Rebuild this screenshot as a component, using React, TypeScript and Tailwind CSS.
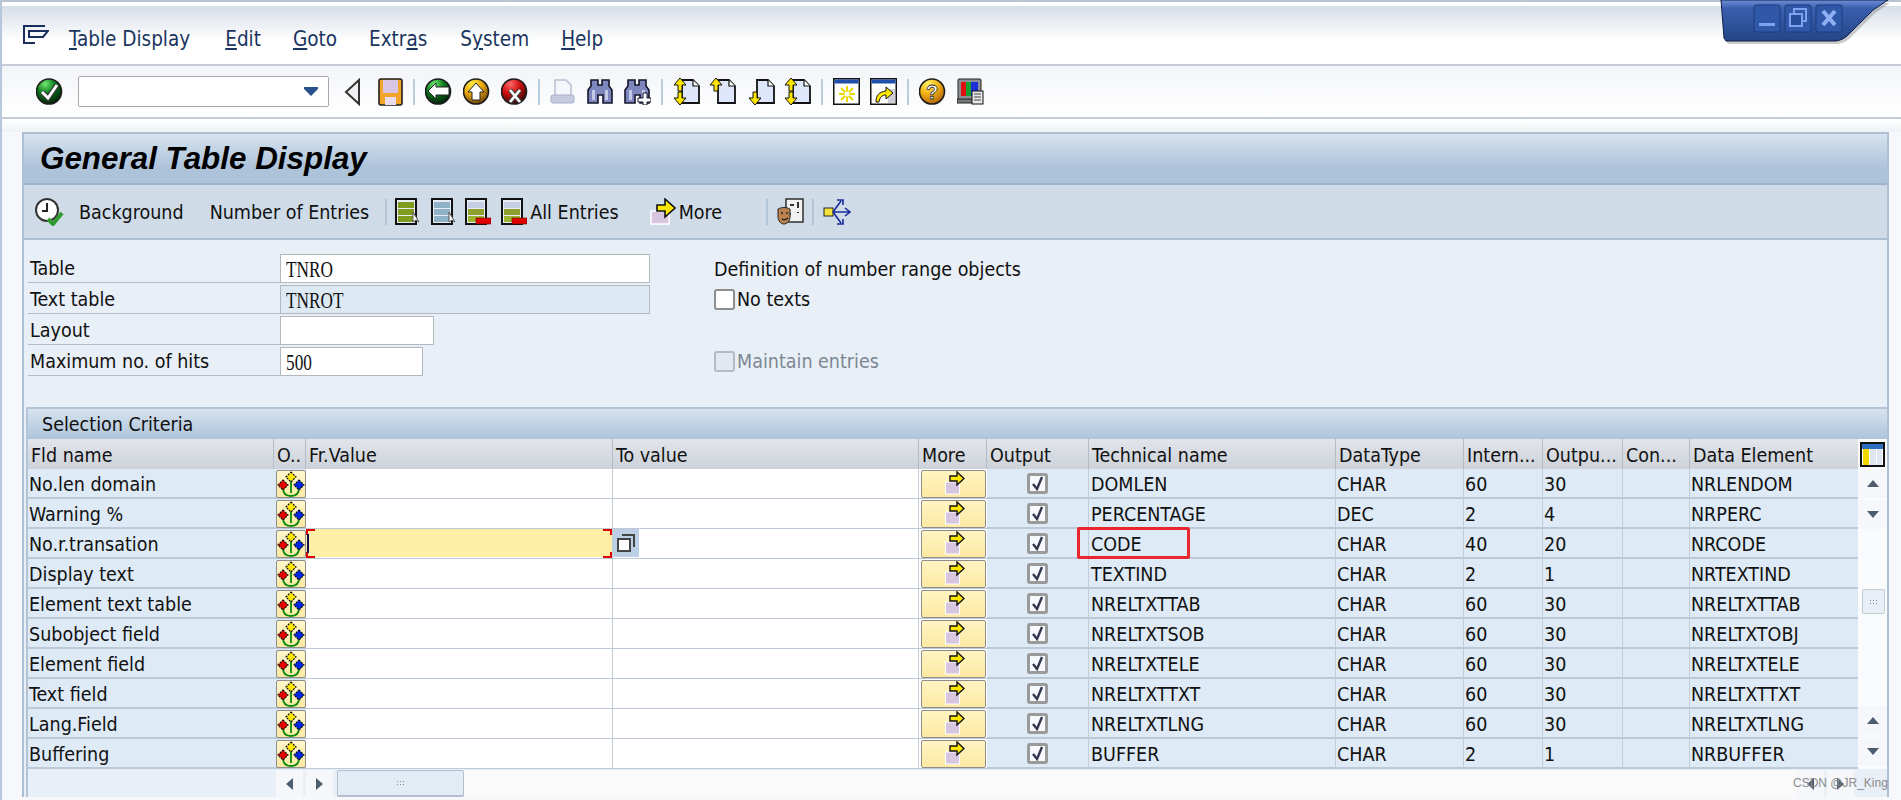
import type { ReactNode } from 'react';

const rows = [
    ['No.len domain', 'DOMLEN', 'CHAR', '60', '30', 'NRLENDOM'],
    ['Warning %', 'PERCENTAGE', 'DEC', '2', '4', 'NRPERC'],
    ['No.r.transation', 'CODE', 'CHAR', '40', '20', 'NRCODE'],
    ['Display text', 'TEXTIND', 'CHAR', '2', '1', 'NRTEXTIND'],
    ['Element text table', 'NRELTXTTAB', 'CHAR', '60', '30', 'NRELTXTTAB'],
    ['Subobject field', 'NRELTXTSOB', 'CHAR', '60', '30', 'NRELTXTOBJ'],
    ['Element field', 'NRELTXTELE', 'CHAR', '60', '30', 'NRELTXTELE'],
    ['Text field', 'NRELTXTTXT', 'CHAR', '60', '30', 'NRELTXTTXT'],
    ['Lang.Field', 'NRELTXTLNG', 'CHAR', '60', '30', 'NRELTXTLNG'],
    ['Buffering', 'BUFFER', 'CHAR', '2', '1', 'NRBUFFER'],
];

const headers = ['Fld name', 'O..', 'Fr.Value', 'To value', 'More', 'Output', 'Technical name', 'DataType', 'Intern...', 'Outpu...', 'Con...', 'Data Element'];
const grid = 'grid grid-cols-[246px_32px_307px_306px_68px_102px_247px_128px_79px_80px_67px_167px]';

const Icon = ({ w = 27, h = 27, children }: { w?: number; h?: number; children: ReactNode }) => (
    <svg width={w} height={h} viewBox={`0 0 ${w} ${h}`} className="shrink-0">
        {children}
    </svg>
);

const Ball = ({ a, b, c, children }: { a: string; b: string; c: string; children: ReactNode }) => (
    <Icon>
        <defs>
            <radialGradient id={`ball${a.slice(1)}`} cx="0.35" cy="0.2" r="0.85">
                <stop offset="0" stopColor={a} />
                <stop offset="0.45" stopColor={b} />
                <stop offset="1" stopColor={c} />
            </radialGradient>
        </defs>
        <circle cx="13" cy="13.5" r="12.5" fill={`url(#ball${a.slice(1)})`} stroke="#1c1c1c" strokeWidth="1.6" />
        {children}
    </Icon>
);

const Sep = () => <div className="mx-[10px] h-[26px] w-[2px] shrink-0 bg-[#b9cde0]" />;

const Binoculars = ({ plus }: { plus?: boolean }) => (
    <Icon w={27}>
        <path d="M4 2h7v5h4V2h7v6l3 4v13H16v-8h-5v8H1V12l3-4z" fill="#7d87bd" stroke="#15152a" strokeWidth="1.6" />
        <path d="M5 12h3v10H5zM18 12h3v10h-3z" fill="#c2c8e6" />
        {plus && <path d="M14 20h5v-5h4v5h4v4h-4v3h-4v-3h-5z" fill="#fff" stroke="#15152a" />}
    </Icon>
);

const Page = ({ up, down }: { up?: boolean; down?: boolean }) => (
    <Icon w={27}>
        <path d="M9 2h11l6 6v17H9z" fill="#dde6fa" stroke="#111" strokeWidth="1.8" />
        <path d="M20 2v6h6" fill="#fff" stroke="#111" strokeWidth="1.2" />
        {up && <path d="M7 0l6 7H9v6H5V7H1z" fill="#ffe600" stroke="#111" />}
        {down && <path d="M7 27l6-7H9v-6H5v6H1z" fill="#ffe600" stroke="#111" />}
    </Icon>
);

const Win = ({ children }: { children: ReactNode }) => (
    <Icon>
        <rect x="0.75" y="0.75" width="25.5" height="25.5" fill="#fff" stroke="#111" strokeWidth="1.5" />
        <rect x="1.5" y="1.5" width="24" height="4" fill="#1f4fa8" />
        {children}
    </Icon>
);

const Sheet = ({ fill, red }: { fill: string; red?: boolean }) => (
    <Icon w={26}>
        <rect x="1" y="1" width="20" height="25" fill="#e8ecf4" stroke="#111" strokeWidth="2" />
        <rect x="3" y="4" width="16" height="6" fill={red ? '#c4cfe4' : fill} />
        <rect x="3" y="11" width="16" height="6" fill={fill} />
        <rect x="3" y="18" width="16" height="6" fill={red ? '#9bb52e' : fill} />
        {red ? <rect x="11" y="20" width="15" height="6" fill="#e00000" stroke="#600" strokeWidth="0.6" /> : <path d="M18 14v10l3-2 3 2z" fill="#fff" stroke="#555" />}
    </Icon>
);

const Flower = () => (
    <Icon w={28} h={26}>
        <path d="M14 9v13M6 17c0 6 4 8 8 8s8-2 8-8" fill="none" stroke="#0a8a0a" strokeWidth="1.8" />
        <path d="M14 1l5 5-5 5-5-5z" fill="#ffe800" stroke="#111" strokeWidth="1.2" strokeDasharray="2 1" />
        <path d="M6 9l5 5-5 5-5-5z" fill="#e80000" stroke="#111" strokeWidth="1.2" strokeDasharray="2 1" />
        <path d="M22 9l5 5-5 5-5-5z" fill="#0028e0" stroke="#111" strokeWidth="1.2" strokeDasharray="2 1" />
    </Icon>
);

const MoreArrow = () => (
    <Icon w={26} h={27}>
        <rect x="1" y="13" width="18" height="13" fill="#d8c6e0" stroke="#fff" strokeWidth="1.5" />
        <path d="M7 7h8V1l10 9-10 9v-6H7z" fill="#ffe800" stroke="#111" strokeWidth="1.6" />
    </Icon>
);

const FlowerButton = () => (
    <div className="flex h-[28px] w-[30px] items-center justify-center rounded-[2px] border border-[#8d8d8d] bg-gradient-to-b from-[#fff6cc] to-[#fde9a2]">
        <Flower />
    </div>
);

const MoreButton = () => (
    <div className="flex h-[28px] w-[65px] items-start justify-center rounded-[2px] border border-[#8d8d8d] bg-gradient-to-b from-[#fff4c2] to-[#fde9a2] pl-[2px]">
        <Icon w={20} h={24}>
            <rect x="0.5" y="11" width="14" height="12" fill="#d8c6e0" stroke="#fff" />
            <path d="M5 5h7V1l7 6.5-7 6.5v-4H5z" fill="#ffe800" stroke="#111" strokeWidth="1.4" />
        </Icon>
    </div>
);

const Check = () => (
    <div className="flex h-[21px] w-[21px] items-center justify-center rounded-[3px] border-[3px] border-[#9a9a9a] bg-[#f7f9fc]">
        <svg width="13" height="15" viewBox="0 0 13 15">
            <path d="M2 8l4 5 5-12" fill="none" stroke="#33384f" strokeWidth="2.4" />
        </svg>
    </div>
);

const Arrow = ({ dir }: { dir: 'up' | 'down' | 'left' | 'right' }) => {
    const paths = { up: 'M7 1l6 7H1z', down: 'M1 1h12L7 8z', left: 'M8 1v12L1 7z', right: 'M1 1v12l7-6z' };
    const big = dir === 'up' || dir === 'down';
    return (
        <svg width={big ? 14 : 9} height={big ? 9 : 14}>
            <path d={paths[dir]} fill="#4d5d6e" />
        </svg>
    );
};

const ScrollBtn = ({ dir, wide }: { dir: 'up' | 'down' | 'left' | 'right'; wide?: boolean }) => (
    <div className={`flex shrink-0 items-center justify-center bg-[#f5f7fa] ${wide ? 'h-[29px] w-[28px]' : 'h-[27px] w-[27px]'}`}>
        <Arrow dir={dir} />
    </div>
);

const Grip = () => (
    <div className="grid grid-cols-3 gap-[2px]">
        {Array.from({ length: 6 }, (_, i) => (
            <div key={i} className="h-[1px] w-[1px] bg-[#7d8896]" />
        ))}
    </div>
);

const Value = ({ text }: { text: string }) => (
    <span className="inline-block origin-left scale-x-[0.75] font-['Liberation_Serif',serif] text-[23px] leading-none text-[#111]">{text}</span>
);

const FormRow = ({ label, width, value, shaded, children }: { label: string; width: number; value?: string; shaded?: boolean; children?: ReactNode }) => (
    <div className="flex h-[31px] items-end">
        <div className="ml-[4px] flex h-[29px] w-[252px] items-center border-b border-[#b5bdc7] pl-[2px] pt-[2px]">{label}</div>
        <div className="w-[434px]">
            <div
                style={{ width }}
                className={`flex h-[29px] items-center overflow-hidden border border-[#b3b8bf] pl-[5px] pt-[2px] ${shaded ? 'bg-[#dde9f3]' : 'bg-white'}`}
            >
                {value && <Value text={value} />}
            </div>
        </div>
        <div className="flex h-[29px] items-center">{children}</div>
    </div>
);

const Box = ({ disabled }: { disabled?: boolean }) => (
    <div className={`h-[21px] w-[21px] rounded-[3px] border-[2px] ${disabled ? 'border-[#b4bbc4] bg-[#e2e8ef]' : 'border-[#8e8e8e] bg-white'}`} />
);

const Row = ({ row, index }: { row: string[]; index: number }) => (
    <div className={`${grid} h-[30px] border-b-2 border-[#bdc9d7] bg-[#deeaf5]`}>
        <div className="flex items-center overflow-hidden pl-[1px] pt-[2px]">{row[0]}</div>
        <div className="flex items-start pl-[2px] pt-[1px]">
            <FlowerButton />
        </div>
        <div className="relative border-r border-[#c3cdd8] bg-white">
            {index === 2 && (
                <div className="h-[28px] bg-[#ffeea6]">
                    <div className="absolute left-0 top-0 h-[6px] w-[9px] border-l-2 border-t-2 border-[#e00000]" />
                    <div className="absolute bottom-0 left-0 h-[6px] w-[9px] border-b-2 border-l-2 border-[#e00000]" />
                    <div className="absolute right-0 top-0 h-[6px] w-[9px] border-r-2 border-t-2 border-[#e00000]" />
                    <div className="absolute bottom-0 right-0 h-[6px] w-[9px] border-b-2 border-r-2 border-[#e00000]" />
                    <div className="absolute left-[1px] top-[5px] h-[19px] w-[2px] bg-[#101050]" />
                </div>
            )}
        </div>
        <div className="border-r border-[#c3cdd8] bg-white">
            {index === 2 && (
                <div className="flex h-[28px] w-[26px] items-center justify-center bg-[#bccfe5]">
                    <svg width="18" height="18" viewBox="0 0 18 18">
                        <path d="M5 1h12v12" fill="none" stroke="#444" strokeWidth="2" />
                        <rect x="1" y="5" width="12" height="12" fill="#fff" stroke="#444" strokeWidth="2" />
                    </svg>
                </div>
            )}
        </div>
        <div className="flex items-start bg-white pl-[2px] pt-[1px]">
            <MoreButton />
        </div>
        <div className="flex items-center justify-center border-r border-[#c3cdd8]">
            <Check />
        </div>
        <div className="relative flex items-center border-r border-[#c3cdd8] pl-[2px] pt-[2px]">
            {row[1]}
            {index === 2 && <div className="absolute -left-[12px] -top-[2px] h-[32px] w-[113px] rounded-[2px] border-[3px] border-[#e8262c]" />}
        </div>
        <div className="flex items-center border-r border-[#c3cdd8] pl-[1px] pt-[2px]">{row[2]}</div>
        <div className="flex items-center border-r border-[#c3cdd8] pl-[1px] pt-[2px]">{row[3]}</div>
        <div className="flex items-center border-r border-[#c3cdd8] pl-[1px] pt-[2px]">{row[4]}</div>
        <div className="border-r border-[#c3cdd8]" />
        <div className="flex items-center pl-[1px] pt-[2px]">{row[5]}</div>
    </div>
);

const App = () => (
    <div className="relative h-[800px] w-full overflow-hidden bg-[#f6f8fb] font-['DejaVu_Sans',sans-serif] text-[19.5px] leading-none text-[#111] [font-stretch:condensed]">
        {/* window controls */}
        <svg width="170" height="50" viewBox="0 0 170 50" className="absolute right-[11px] top-0">
            <defs>
                <linearGradient id="winBlue" x1="0" y1="0" x2="0" y2="1">
                    <stop offset="0" stopColor="#6f90d8" />
                    <stop offset="0.2" stopColor="#3a5fae" />
                    <stop offset="1" stopColor="#234688" />
                </linearGradient>
            </defs>
            <path d="M1 0L4 38L6 41H116C122 40 125 38 129 34L153 10L168 0z" fill="#6d6d6d" opacity="0.35" transform="translate(2 3)" />
            <path d="M1 0L4 38L6 41H116C122 40 125 38 129 34L153 10L168 0z" fill="url(#winBlue)" stroke="#101c45" strokeWidth="1" />
            <rect x="34" y="5" width="26" height="27" rx="2" fill="#2f58a8" stroke="#1c3a7c" />
            <rect x="65" y="5" width="26" height="27" rx="2" fill="#2f58a8" stroke="#1c3a7c" />
            <rect x="96" y="5" width="26" height="27" rx="2" fill="#2f58a8" stroke="#1c3a7c" />
            <rect x="39" y="23" width="16" height="3" fill="#7ea2ee" />
            <path d="M74 13v-4h12v12h-4" fill="none" stroke="#7ea2ee" strokeWidth="2" />
            <rect x="70" y="14" width="12" height="12" fill="#244c98" stroke="#7ea2ee" strokeWidth="2" />
            <path d="M103 11l12 14M115 11l-12 14" stroke="#8fb0f2" strokeWidth="4" />
        </svg>

        {/* menu */}
        <div className="h-[66px] border-b-2 border-[#c5ccd8]">
            <div className="h-[2px] bg-[#b9c4d2]" />
            <div className="h-[4px] bg-white" />
            <div className="flex h-[58px] items-start bg-gradient-to-b from-[#d6dee7] via-white via-60% to-white pl-[23px] text-[#1b3560]">
                <svg width="26" height="20" viewBox="0 0 26 20" className="mt-[19px] shrink-0">
                    <path d="M22 1H1v17h11M6 6h19l-5 6H6z" fill="none" stroke="#1b2f5e" strokeWidth="2" />
                </svg>
                <div className="ml-[20px] mt-[23px] flex gap-[32px] text-[20.5px]">
                    <span className="mr-[3px]">
                        <u>T</u>able Display
                    </span>
                    <span>
                        <u>E</u>dit
                    </span>
                    <span>
                        <u>G</u>oto
                    </span>
                    <span className="mr-[1px]">
                        Extr<u>a</u>s
                    </span>
                    <span>
                        S<u>y</u>stem
                    </span>
                    <span>
                        <u>H</u>elp
                    </span>
                </div>
            </div>
        </div>

        {/* system toolbar */}
        <div className="flex h-[53px] items-center border-b-2 border-[#c5ccd8] bg-gradient-to-b from-[#f2f4f8] to-white pl-[36px]">
            <Ball a="#6fe86f" b="#0c7a1c" c="#031a08">
                <path d="M6 14l6 6L21 7" fill="none" stroke="#333" strokeWidth="5" />
                <path d="M6 14l6 6L21 7" fill="none" stroke="#fff" strokeWidth="3" />
            </Ball>
            <div className="ml-[15px] flex h-[31px] w-[251px] items-center justify-end rounded-[2px] border border-[#a8a8a8] bg-white pr-[10px]">
                <svg width="14" height="9">
                    <path d="M0 0h14v2L7 9 0 2z" fill="#27508c" />
                </svg>
            </div>
            <svg width="17" height="28" viewBox="0 0 17 28" className="ml-[15px] shrink-0">
                <path d="M15 2v24L2 14z" fill="#eef0f3" stroke="#333" strokeWidth="2" />
            </svg>
            <div className="ml-[17px]">
                <Icon w={25} h={28}>
                    <rect x="1" y="1" width="23" height="26" rx="2" fill="#f2a52a" stroke="#1f1f1f" strokeWidth="1.6" />
                    <rect x="5" y="2" width="15" height="13" fill="#d9c6e4" />
                    <rect x="7" y="19" width="11" height="8" fill="#e9dcec" />
                </Icon>
            </div>
            <Sep />
            <Ball a="#6fe86f" b="#0f8f25" c="#041c09">
                <path d="M11 5L3 13l8 8v-4h13V9H11z" fill="#fff" stroke="#222" />
            </Ball>
            <div className="ml-[11px]">
                <Ball a="#ffe94a" b="#efae10" c="#6b4204">
                    <path d="M13 5l8 9h-4v8H9v-8H5z" fill="#fff" stroke="#222" />
                </Ball>
            </div>
            <div className="ml-[11px]">
                <Ball a="#ff6a6a" b="#d01010" c="#300404">
                    <path d="M9 12l10 12M19 12L9 24" stroke="#444" strokeWidth="5" />
                    <path d="M9 12l10 12M19 12L9 24" stroke="#fff" strokeWidth="2.6" />
                </Ball>
            </div>
            <Sep />
            <Icon w={25}>
                <path d="M5 2h11l5 5v11H5z" fill="#f4f6fb" stroke="#b9bfd4" strokeWidth="1.5" />
                <rect x="1" y="17" width="23" height="8" rx="2" fill="#c7cbe0" stroke="#a9aec8" />
            </Icon>
            <div className="ml-[12px]">
                <Binoculars />
            </div>
            <div className="ml-[10px]">
                <Binoculars plus />
            </div>
            <Sep />
            <Page up down />
            <div className="ml-[9px]">
                <Page up />
            </div>
            <div className="ml-[12px]">
                <Page down />
            </div>
            <div className="ml-[9px]">
                <Page up down />
            </div>
            <Sep />
            <Win>
                <path d="M14 8v16M6 16h16M8 10l12 12M20 10L8 22" stroke="#e6d800" strokeWidth="2" />
                <circle cx="14" cy="16" r="2.5" fill="#fff" />
            </Win>
            <div className="ml-[10px]">
                <Win>
                    <rect x="18" y="11" width="7" height="14" fill="#cfcfd6" />
                    <path d="M6 24c0-7 3-10 10-11v-4l7 6-7 6v-4c-4 0-6 2-7 7z" fill="#ffe800" stroke="#111" />
                </Win>
            </div>
            <Sep />
            <Ball a="#fff36a" b="#f5b516" c="#b06208">
                <text x="7" y="21" fontSize="20" fontWeight="700" fill="#fff" stroke="#333" strokeWidth="0.8" fontFamily="Liberation Sans">
                    ?
                </text>
            </Ball>
            <div className="ml-[11px]">
                <Icon w={27}>
                    <rect x="1" y="1" width="23" height="21" rx="1" fill="#8b8f96" stroke="#222" />
                    <rect x="4" y="4" width="5" height="14" fill="#e01010" />
                    <rect x="9" y="4" width="5" height="14" fill="#18a030" />
                    <rect x="14" y="4" width="7" height="14" fill="#1d30d8" />
                    <rect x="0" y="21" width="18" height="4" fill="#777" stroke="#222" />
                    <rect x="15" y="13" width="11" height="13" fill="#e8e8e8" stroke="#111" />
                    <path d="M17 16h7M17 19h7M17 22h7" stroke="#444" />
                </Icon>
            </div>
        </div>

        <div className="h-[13px] bg-gradient-to-b from-white to-[#eef2f6]" />

        {/* main panel */}
        <div className="absolute left-0 top-0 h-full w-[2px] bg-[#b8c8dc]" />
        <div className="ml-[22px] w-[1867px] border-x-2 border-t-2 border-[#adbfd3] bg-[#e8eff6]">
            <div className="flex h-[51px] items-center border-b-2 border-[#9db4cc] bg-gradient-to-b from-[#d7e3ef] via-[#adc3da] via-70% to-[#adc3da] pl-[16px]">
                <span className="font-['Liberation_Sans',sans-serif] text-[31.4px] font-bold italic text-black [font-stretch:normal]">General Table Display</span>
            </div>

            <div className="flex h-[55px] items-center border-b-2 border-[#adbfd3] bg-[#cfdce8] pl-[10px]">
                <Icon w={30} h={28}>
                    <circle cx="13" cy="12" r="11" fill="#fff" stroke="#333" strokeWidth="2" />
                    <path d="M13 5v8h-5" fill="none" stroke="#222" strokeWidth="2" />
                    <path d="M14 21l5 5 9-11" fill="none" stroke="#2f9a2f" strokeWidth="4" />
                </Icon>
                <span className="ml-[15px] mt-[2px]">Background</span>
                <span className="ml-[26px] mt-[2px]">Number of Entries</span>
                <div className="ml-[16px] mr-[8px] h-[26px] w-[2px] bg-[#b3c6d8]" />
                <Sheet fill="#7f9c1e" />
                <div className="ml-[10px]">
                    <Sheet fill="#8fb2c7" />
                </div>
                <div className="ml-[8px]">
                    <Sheet fill="#8fa02c" red />
                </div>
                <div className="ml-[10px]">
                    <Sheet fill="#8fa02c" red />
                </div>
                <span className="ml-[3px] mt-[2px]">All Entries</span>
                <div className="ml-[31px]">
                    <MoreArrow />
                </div>
                <span className="ml-[3px] mt-[2px]">More</span>
                <div className="ml-[44px] h-[26px] w-[2px] bg-[#b3c6d8]" />
                <div className="ml-[9px]">
                    <Icon>
                        <rect x="9" y="1" width="17" height="23" fill="#f1f1f1" stroke="#222" strokeWidth="1.4" />
                        <path d="M13 7h4M21 4v6M13 16h1M21 14v1" stroke="#333" strokeWidth="2" />
                        <path d="M1 11c4-2 8-2 12 0v8c0 4-3 7-6 7s-6-3-6-7z" fill="#b9824e" stroke="#222" />
                        <path d="M4 15h2M9 15h2M5 21c1 1 4 1 6-1" fill="none" stroke="#222" strokeWidth="1.4" />
                    </Icon>
                </div>
                <div className="ml-[8px] h-[26px] w-[2px] bg-[#b3c6d8]" />
                <div className="ml-[9px]">
                    <Icon w={28}>
                        <rect x="1" y="10" width="9" height="8" fill="#f2e23a" stroke="#222" />
                        <path d="M10 14h16M10 14L18 3M10 14l8 11M22 10l5 4-5 4M14 2h6v5M14 26h6v-5" fill="none" stroke="#1b2a9c" strokeWidth="1.6" />
                    </Icon>
                </div>
            </div>

            <div className="h-[167px] pt-[12px]">
                <FormRow label="Table" width={370} value="TNRO">
                    <span className="pt-[2px]">Definition of number range objects</span>
                </FormRow>
                <FormRow label="Text table" width={370} value="TNROT" shaded>
                    <div className="flex items-center gap-[2px]">
                        <Box />
                        <span>No texts</span>
                    </div>
                </FormRow>
                <FormRow label="Layout" width={154} />
                <FormRow label="Maximum no. of hits" width={143} value="500">
                    <div className="flex items-center gap-[2px] text-[#7d8794]">
                        <Box disabled />
                        <span>Maintain entries</span>
                    </div>
                </FormRow>
            </div>

            {/* selection criteria */}
            <div className="ml-[2px] border-l-2 border-t-2 border-[#b3c4d6]">
                <div className="flex h-[30px] items-center bg-gradient-to-b from-[#d7e3ef] to-[#aec4da] pl-[14px] pt-[2px]">Selection Criteria</div>
                <div className="flex">
                    <div className="w-[1830px] shrink-0">
                        <div className={`${grid} h-[30px] bg-gradient-to-b from-[#e2e5ea] to-[#cdd2da]`}>
                            {headers.map((h, i) => (
                                <div key={h} className={`flex items-center overflow-hidden whitespace-nowrap pl-[3px] pt-[4px] ${i < 11 ? 'border-r border-[#b5bcc6]' : ''}`}>
                                    {h}
                                </div>
                            ))}
                        </div>
                        {rows.map((row, i) => (
                            <Row key={row[0]} row={row} index={i} />
                        ))}
                    </div>
                    <div className="flex w-[31px] flex-col bg-[#fafbfc] pl-[1px]">
                        <div className="flex h-[30px] items-center justify-center pr-[2px]">
                            <svg width="25" height="25" viewBox="0 0 25 25">
                                <rect x="1" y="1" width="23" height="23" fill="#fff" stroke="#111" strokeWidth="2" />
                                <rect x="2" y="2" width="21" height="5" fill="#2d6fc0" />
                                <rect x="3" y="7" width="6" height="16" fill="#f2d800" />
                                <rect x="10" y="7" width="6" height="16" fill="#dfe6ef" />
                                <rect x="17" y="7" width="5" height="16" fill="#dfe6ef" />
                            </svg>
                        </div>
                        <ScrollBtn dir="up" wide />
                        <div className="h-[2px]" />
                        <ScrollBtn dir="down" wide />
                        <div className="mt-[60px] flex h-[25px] w-[23px] items-center justify-center self-center rounded-[2px] border border-[#c3ccd6] bg-[#e9eff6]">
                            <Grip />
                        </div>
                        <div className="mt-[92px]">
                            <ScrollBtn dir="up" wide />
                        </div>
                        <div className="h-[2px]" />
                        <ScrollBtn dir="down" wide />
                    </div>
                </div>
                <div className="flex pl-[248px] pt-[1px]">
                    <ScrollBtn dir="left" />
                    <div className="w-[3px]" />
                    <ScrollBtn dir="right" />
                    <div className="ml-[4px] flex h-[27px] w-[127px] items-center justify-center rounded-[2px] border border-b-2 border-[#b3bfcc] bg-[#e3ebf4]">
                        <Grip />
                    </div>
                    <div className="h-[27px] w-[1333px] bg-[#fafafa]" />
                    <ScrollBtn dir="left" />
                    <div className="w-[3px]" />
                    <ScrollBtn dir="right" />
                </div>
            </div>
        </div>

        <div className="absolute left-[1793px] top-[777px] whitespace-nowrap font-['Liberation_Sans',sans-serif] text-[12px] text-[#8b8b8b] [font-stretch:normal]">CSDN @JR_King</div>
    </div>
);

export default App;
